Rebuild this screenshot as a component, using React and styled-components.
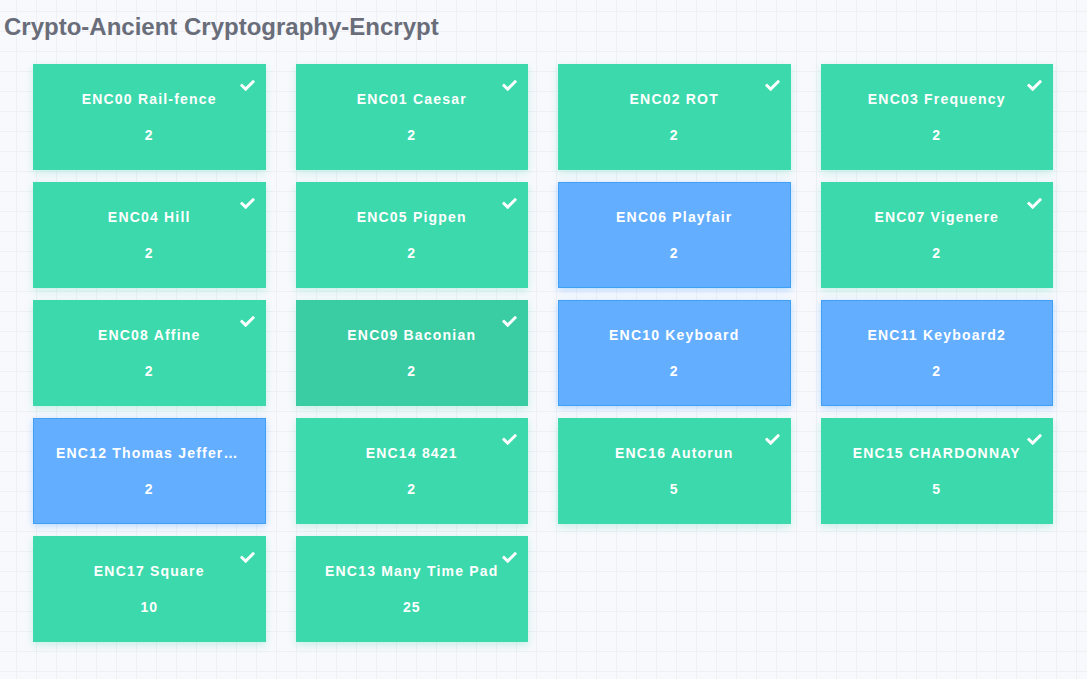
import React from 'react';
import styled, { createGlobalStyle } from 'styled-components';

const GlobalStyle = createGlobalStyle`
  html, body {
    margin: 0;
    padding: 0;
  }
  body {
    font-family: "Liberation Sans", Arial, sans-serif;
    background-color: #f8f9fd;
    background-image:
      linear-gradient(to right, #eef0f6 1px, transparent 1px),
      linear-gradient(to bottom, #eef0f6 1px, transparent 1px);
    background-size: 20px 20px;
    background-position: 16px 11px;
    min-height: 100vh;
  }
`;

const challenges = [
  { name: 'ENC00 Rail-fence', score: 2, solved: true },
  { name: 'ENC01 Caesar', score: 2, solved: true },
  { name: 'ENC02 ROT', score: 2, solved: true },
  { name: 'ENC03 Frequency', score: 2, solved: true },
  { name: 'ENC04 Hill', score: 2, solved: true },
  { name: 'ENC05 Pigpen', score: 2, solved: true },
  { name: 'ENC06 Playfair', score: 2, solved: false },
  { name: 'ENC07 Vigenere', score: 2, solved: true },
  { name: 'ENC08 Affine', score: 2, solved: true },
  { name: 'ENC09 Baconian', score: 2, solved: true, hover: true },
  { name: 'ENC10 Keyboard', score: 2, solved: false },
  { name: 'ENC11 Keyboard2', score: 2, solved: false },
  { name: 'ENC12 Thomas Jefferson', score: 2, solved: false },
  { name: 'ENC14 8421', score: 2, solved: true },
  { name: 'ENC16 Autorun', score: 5, solved: true },
  { name: 'ENC15 CHARDONNAY', score: 5, solved: true },
  { name: 'ENC17 Square', score: 10, solved: true },
  { name: 'ENC13 Many Time Pad', score: 25, solved: true },
];

const CheckIcon = () => (
  <svg width="15" height="11" viewBox="0 64 512 384" fill="#fff">
    <path d="M173.898 439.404l-166.4-166.4c-9.997-9.997-9.997-26.206 0-36.204l36.203-36.204c9.997-9.998 26.207-9.998 36.204 0L192 312.69 432.095 72.596c9.997-9.997 26.207-9.997 36.204 0l36.203 36.204c9.997 9.997 9.997 26.206 0 36.204l-294.4 294.401c-9.998 9.997-26.207 9.997-36.204-.001z" />
  </svg>
);

const App = () => {
  return (
    <>
      <GlobalStyle />
      <Page>
        <Title>Crypto-Ancient Cryptography-Encrypt</Title>
        <Grid>
          {challenges.map((c) => (
            <Card key={c.name} $solved={c.solved} $hover={c.hover}>
              {c.solved && (
                <Check>
                  <CheckIcon />
                </Check>
              )}
              <CardName>{c.name}</CardName>
              <CardScore>{c.score}</CardScore>
            </Card>
          ))}
        </Grid>
      </Page>
    </>
  );
};

export default App;

const Page = styled.div`
  padding: 0 0 30px 0;
`;

const Title = styled.h1`
  margin: 0;
  padding: 13px 0 0 4px;
  font-size: 24px;
  line-height: 28px;
  font-weight: bold;
  color: #696d79;
`;

const Grid = styled.div`
  display: grid;
  grid-template-columns: repeat(4, minmax(0, 1fr));
  column-gap: 30px;
  row-gap: 12px;
  width: 1020px;
  margin: 23px 0 0 33px;
`;

const Card = styled.div`
  position: relative;
  box-sizing: border-box;
  min-width: 0;
  height: 106px;
  display: flex;
  flex-direction: column;
  align-items: stretch;
  padding: 25px 22px 0;
  color: #fff;
  text-align: center;
  background: ${({ $solved, $hover }) =>
    !$solved ? '#63aeff' : $hover ? '#3acca3' : '#3cd9ac'};
  border: 1px solid ${({ $solved, $hover }) =>
    !$solved ? '#3fa0f5' : $hover ? '#3acca3' : '#3cd9ac'};
  box-shadow: ${({ $solved }) =>
    $solved
      ? '0 3px 8px rgba(61, 217, 171, 0.25)'
      : '0 2px 7px rgba(64, 158, 255, 0.35)'};
  cursor: pointer;
`;

const Check = styled.span`
  position: absolute;
  top: 15px;
  right: 10px;
  line-height: 0;
`;

const CardName = styled.div`
  font-size: 14px;
  line-height: 18px;
  font-weight: bold;
  letter-spacing: 1.2px;
  white-space: nowrap;
  overflow: hidden;
  text-overflow: ellipsis;
`;

const CardScore = styled.div`
  margin-top: 18px;
  font-size: 14px;
  line-height: 18px;
  font-weight: bold;
  letter-spacing: 1px;
`;
